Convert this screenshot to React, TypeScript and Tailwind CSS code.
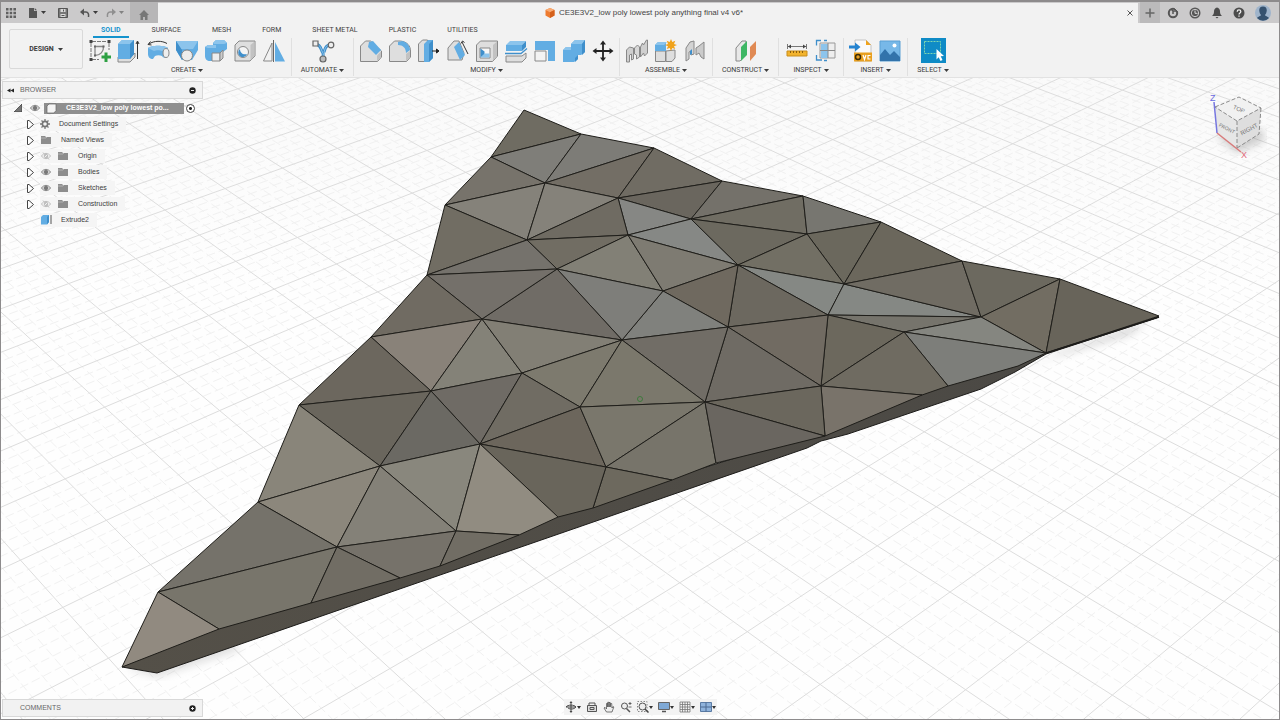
import type { ReactNode } from 'react'
import clsx from 'clsx'

type Pt = [number, number]

/* ---------- Ground grid ---------- */

// Plane to screen: two vanishing points on a level horizon.
const project = (u: number, v: number): Pt => {
  const a = u * 0.03592
  const b = v * 0.03242
  const d = 1 + a + b
  return [(950 - 1147 * a + 2823 * b) / d, (592 - 740 * a - 740 * b) / d]
}

const segment = (p: Pt, q: Pt) =>
  `M${p[0].toFixed(1)} ${p[1].toFixed(1)}L${q[0].toFixed(1)} ${q[1].toFixed(1)}`

function gridPath(major: boolean) {
  const out: string[] = []
  for (let k = -60; k <= 130; k++) {
    if ((k % 5 === 0) !== major) continue
    const c = k / 5
    // keep every end point in front of the camera
    out.push(segment(project(c, Math.max(-14, -24 - c)), project(c, 26)))
    out.push(segment(project(Math.max(-12, -22 - c), c), project(26, c)))
  }
  return out.join('')
}

const MAJOR = gridPath(true)
const MINOR = gridPath(false)

/* ---------- Low poly body ---------- */

const P: Record<string, Pt> = {
  t1: [524, 110], t2: [581, 134], t3: [654, 148], t4: [722, 181], t5: [803, 196],
  t6: [881, 222], t7: [962, 261], t8: [1060, 279], t9: [1159, 316],
  a: [491, 157], b: [445, 205], c: [427, 275], d: [371, 337], e: [299, 405],
  f: [258, 502], g: [158, 592], h: [122, 667],
  i: [545, 183], j: [618, 198], k: [691, 219], l: [527, 240], m: [628, 235],
  n: [557, 269], o: [738, 265], p: [663, 291], q: [807, 234], r: [844, 284],
  s: [828, 315], t: [981, 317], u: [904, 332], v: [1046, 353], w: [728, 327],
  x: [622, 340], y: [482, 319], z: [431, 391],
  A: [522, 373], B: [580, 407], C: [705, 402], D: [821, 386], E: [380, 466],
  F: [480, 444], G: [606, 467], H: [716, 463], I: [825, 436], J: [337, 547],
  K: [456, 531], L: [519, 535], M: [558, 517], N: [593, 508], O: [672, 480],
  P: [922, 395], Q: [948, 386], R: [440, 566], S: [400, 578], U: [311, 603],
  V: [219, 629], W: [1018, 366],
}

const FACES: [string, string][] = [
  ['t1 t2 a', '#6f6c62'], ['a t2 i', '#7f7e79'], ['t2 t3 i', '#7d7c77'], ['t3 j i', '#736e65'],
  ['t3 t4 j', '#706c63'], ['a i b', '#77736b'], ['b i l', '#85827a'], ['i j l', '#85827a'],
  ['t4 k j', '#6a665e'], ['t4 t5 k', '#74716a'], ['t5 q k', '#706d63'], ['j k m', '#868784'],
  ['k o m', '#868885'], ['j m l', '#6f6b62'], ['l m n', '#716d63'], ['b l c', '#716d63'],
  ['c l n', '#75726c'], ['m p n', '#828076'], ['m o p', '#7e7b72'], ['k q o', '#6c695f'],
  ['t5 t6 q', '#777670'], ['q t6 r', '#6b685d'], ['q r o', '#726f64'], ['t6 t7 r', '#6b675c'],
  ['o r s', '#858884'], ['r t s', '#858884'], ['r t7 t', '#706c63'], ['t7 t8 t', '#6c695f'],
  ['t8 v t', '#726d62'], ['t8 t9 v', '#68645a'], ['s t u', '#76746c'], ['t v u', '#858680'],
  ['u v W Q', '#7d7e7a'], ['s u D', '#6c685d'], ['u Q P D', '#6f6b61'], ['D P I', '#79736a'],
  ['o s w', '#6c685f'], ['o w p', '#6f695f'], ['p w x', '#80817d'], ['n p x', '#7e7e7a'],
  ['w s D', '#716b62'], ['w D C', '#6f6b64'], ['x w C', '#716d66'], ['n x y', '#706c66'],
  ['c n y', '#74706a'], ['c y d', '#706b62'], ['d y z', '#898279'], ['y A z', '#848278'],
  ['y x A', '#827f75'], ['x B A', '#7d7a6e'], ['x C B', '#7b786c'], ['d z e', '#6c675e'],
  ['z A F', '#6f6b65'], ['e z E', '#6a665d'], ['z F E', '#6b6963'], ['A B F', '#706c63'],
  ['F B G', '#6c665c'], ['B C G', '#7a776c'], ['C H O G', '#77746a'], ['G O N', '#6d695e'],
  ['F G N M', '#69655b'], ['C D I', '#6b675d'], ['C I H', '#6a6660'], ['e E f', '#89857a'],
  ['f E J', '#8c877c'], ['f J g', '#75726a'], ['E F K', '#89877d'], ['F M L K', '#918c81'],
  ['E K J', '#848178'], ['g J U V', '#78756b'], ['J K R S', '#76726a'], ['J S U', '#716d64'],
  ['K L R', '#716d64'], ['g V h', '#918a80'],
]

const points = (names: string) => names.split(' ').map((n) => P[n].join(',')).join(' ')

function Viewport() {
  return (
    <svg
      className="absolute inset-0 h-full w-full"
      viewBox="1 78 1278 641"
      preserveAspectRatio="xMidYMid slice"
      aria-label="Model viewport"
    >
      <defs>
        <linearGradient id="fade" x1="0" y1="0" x2="0" y2="1">
          <stop offset="0" stopColor="#f8f8f8" />
          <stop offset="0.4" stopColor="#fefefe" />
        </linearGradient>
        <linearGradient id="shade" x1="0" y1="0" x2="1" y2="0">
          <stop offset="0" stopColor="#545048" />
          <stop offset="1" stopColor="#4a4844" />
        </linearGradient>
        <filter id="soft">
          <feGaussianBlur stdDeviation="4" />
        </filter>
      </defs>
      <rect x="0" y="0" width="1280" height="720" fill="url(#fade)" />
      <path d={MINOR} fill="none" stroke="#f1f1f1" strokeWidth="1" strokeDasharray="9 4" />
      <path d={MAJOR} fill="none" stroke="#dddddd" strokeWidth="1" />

      {/* contact shadow */}
      <path d="M1000 382L1060 352L1148 322L1130 334L1050 358Z" fill="#777" opacity="0.4" filter="url(#soft)" />
      <path d="M126 668L157 677L240 650L230 640Z" fill="#999" opacity="0.3" filter="url(#soft)" />

      <path
        d="M122 667L157 673L807 448L821 441L848 434L981 389L1015 372L1046 354L1159 317L1046 352L948 380L825 430L600 500L219 620Z"
        fill="url(#shade)"
        stroke="#1c1b19"
        strokeWidth="1"
        strokeLinejoin="round"
      />
      {FACES.map(([names, fill]) => (
        <polygon key={names} points={points(names)} fill={fill} stroke="#1f1e1a" strokeWidth="1" strokeLinejoin="round" />
      ))}
      <path d="M1046 353L1100 336L1159 317" fill="none" stroke="#1c1b19" strokeWidth="1.500" />
      <circle cx="640" cy="399" r="2.500" fill="none" stroke="#3f7a3c" />
    </svg>
  )
}

/* ---------- Icons ---------- */

function Svg({ children, size = 24, className }: { children: ReactNode; size?: number; className?: string }) {
  return (
    <svg viewBox={`0 0 ${size} ${size}`} width={size} height={size} fill="none" className={clsx('shrink-0', className)} aria-hidden="true">
      {children}
    </svg>
  )
}

const BLUE = '#62ade3'
const DEEP = '#3f8fcb'
const PALE = '#8cc4ec'
const LINE = '#888888'
const BODY = '#dedede'

const Caret = () => (
  <svg viewBox="0 0 5 3" width="5" height="3" className="shrink-0" aria-hidden="true">
    <path d="M0 0h5L2.500 3z" fill="#3c3c3c" />
  </svg>
)

const icons: Record<string, ReactNode> = {
  'Create Sketch': (
    <>
      <path d="M4 2.500H19M3 4V18.500M4 20.500H11M21 4V11" stroke="#777" strokeDasharray="4 1" />
      <path d="M1.500 1h3v3h-3zM19.500 1h3v3h-3zM1.500 19h3v3h-3z" fill="#444" />
      <path d="M7 7.500h8.500c.3 5-3.300 9-8.500 9z" stroke="#888" strokeWidth="1.300" />
      <path d="M6 6.500h2v2H6zM14.500 6.500h2v2h-2zM6 15.500h2v2H6z" fill="#666" />
      <path d="M18 13.500v9.500M13.500 18h9.500" stroke="#2ea043" strokeWidth="3" />
    </>
  ),
  Extrude: (
    <>
      <path d="M1 18h13l4-4v4l-5 5H1z" fill={BODY} stroke={LINE} />
      <path d="M1 5l4-4h12v14l-4 5H1z" fill={BLUE} />
      <path d="M1 5l4-4h12l-4 4z" fill={PALE} />
      <path d="M13 5l4-4v14l-4 5z" fill={DEEP} />
      <path d="M20.500 20V3M19 5l1.500-3L22 5" stroke="#333" />
    </>
  ),
  Revolve: (
    <>
      <path d="M2 9c3-3 17-3 20 0l-1 9c-2 1-4 1-5-1-2-1-5-1-7 0l-2 3C4 20 2 18 2 15z" fill={BLUE} />
      <path d="M2 9c3-3 17-3 20 0l-6 3c-2-1-6-1-8 0z" fill={PALE} />
      <ellipse cx="20" cy="14" rx="3" ry="4.500" fill="#eee" stroke={LINE} />
      <path d="M3 5c5-3.500 13-3.500 18-.5M4.500 2.500L2 5.500l3.500.5" stroke="#333" />
    </>
  ),
  Sweep: (
    <>
      <path d="M1 2h22v9l-6 10H7L1 11z" fill={BLUE} />
      <path d="M1 2h22l-5 8H6z" fill={PALE} />
      <path d="M1 2l6 9v10L1 11z" fill={DEEP} />
      <circle cx="12" cy="16.500" r="5.500" fill="#ececec" stroke={LINE} />
    </>
  ),
  Loft: (
    <>
      <path d="M9 4l3-3h8l3 3v6l-4 3H9z" fill={BLUE} />
      <path d="M1 8l3-2h8v5h7v8l-4 3H6c-3 0-5-2-5-5z" fill={BLUE} />
      <path d="M9 4l3-3h8l3 3-3 1H10zM1 8l3-2h8v3H4z" fill={PALE} />
      <path d="M8 14h8v8H8z" fill="#eee" stroke={LINE} />
      <path d="M16 14l3-3v8l-3 3z" fill="#ccc" stroke={LINE} />
    </>
  ),
  Hole: (
    <>
      <path d="M2 6l4-4h16v15l-5 5H2z" fill={BODY} stroke={LINE} />
      <path d="M17.500 6l4-3.500v14.500l-4 4.500z" fill="#c2c2c2" />
      <circle cx="10" cy="13" r="5.500" fill="#f4f4f4" stroke={LINE} />
      <path d="M7 10a4.500 4.500 0 1 0 7 5c-4 1-7-1-7-5z" fill={DEEP} />
    </>
  ),
  Mirror: (
    <>
      <path d="M10 4v18H1.500z" fill="#f2f2f2" stroke={LINE} />
      <path d="M13 3l10 19.500H13z" fill={BLUE} />
      <path d="M11.500 1v22" stroke="#666" />
    </>
  ),
  Automate: (
    <>
      <path d="M5 5c5 1 5 6 6.500 8S12 17 12 19M19 6c-5 0-5 5-6 7" stroke={DEEP} strokeWidth="3" />
      <path d="M5 5c5 1 5 6 6.500 8S12 17 12 19M19 6c-5 0-5 5-6 7" stroke={PALE} strokeWidth="1" />
      <path d="M2 2h5v5H2z" fill="#eee" stroke="#666" strokeWidth="1.200" />
      <circle cx="20" cy="6" r="2.800" fill="#eee" stroke="#666" strokeWidth="1.200" />
      <circle cx="12" cy="20" r="3" fill="#bbb" stroke="#666" strokeWidth="1.200" />
    </>
  ),
  'Press Pull': (
    <>
      <path d="M1.500 7l5-5h5l11 10v6l-4 4.500h-17z" fill={BODY} stroke={LINE} />
      <path d="M10 3l4-1 8 9-5 5-8-8z" fill={BLUE} />
      <path d="M18 16.500l4-4v5.500l-4 4z" fill="#c2c2c2" />
    </>
  ),
  Fillet: (
    <>
      <path d="M1.500 7l5-5h6c7 1 10 5 10 10v6l-4 4.500h-17z" fill={BODY} stroke={LINE} />
      <path d="M10 3l4-1c5 1 8 5 8 9l-4 3c0-5-3-8-8-8z" fill={BLUE} />
      <path d="M18 15l4-3v6l-4 4z" fill="#c2c2c2" />
    </>
  ),
  Chamfer: (
    <>
      <path d="M1.500 5l4-4h5v18l-3 3.500h-6z" fill={BODY} stroke={LINE} />
      <path d="M7 5l4-4h5v18l-4 4H7z" fill={BLUE} />
      <path d="M12 5l4-4v18l-4 4z" fill={DEEP} />
      <path d="M15 12h6M19.500 10l2.500 2-2.500 2z" stroke="#222" fill="#222" />
    </>
  ),
  Draft: (
    <>
      <path d="M2 9l6-7h5l5 12-2 7H2z" fill={BODY} stroke={LINE} />
      <path d="M8 8l5-5 6 13-5 5z" fill={BLUE} />
      <path d="M16 3l6 12M15 4.500L16.500 2l2 1.500" stroke="#333" />
    </>
  ),
  Shell: (
    <>
      <path d="M1.500 6l4-4h17v15l-5 5.500h-16z" fill={BODY} stroke={LINE} />
      <path d="M18 6l4-3.500v14.500l-4 4.500z" fill="#c2c2c2" />
      <path d="M5 9h10v10H5z" fill="#f7f7f7" stroke={LINE} />
      <path d="M5.500 9.500l4 3v3l-4 3z" fill={DEEP} />
      <path d="M5.500 18.500l4-4h5v4z" fill={PALE} />
    </>
  ),
  'Split Body': (
    <>
      <path d="M2 17h16l4-3v5l-4 4H2z" fill={BODY} stroke={LINE} />
      <path d="M2 6l4-4h16l-4 4z" fill={PALE} />
      <path d="M2 6h16v6H2z" fill={BLUE} />
      <path d="M18 6l4-4v6l-4 4z" fill={DEEP} />
      <path d="M1 14.500h16l6-5" stroke={DEEP} strokeWidth="1.300" />
    </>
  ),
  Scale: (
    <>
      <path d="M2 2h20v20h-7v-11H2z" fill={BLUE} />
      <path d="M2 12h11v10H2z" fill="#f3f3f3" stroke={LINE} />
    </>
  ),
  Combine: (
    <>
      <path d="M9 5l4-4h10v12l-4 3h-3v4l-4 3H1V11l3-3h5z" fill={BLUE} />
      <path d="M9 5l4-4h10l-3 4zM1 11l3-3h5v3z" fill={PALE} />
      <path d="M20 5l3-4v12l-3 3zM13 19l3-3v4l-3 3z" fill={DEEP} />
    </>
  ),
  Move: (
    <>
      <path d="M12 3v18M3 12h18" stroke="#222" strokeWidth="1.800" />
      <path d="M12 1.500l3 4h-6zM12 22.500l3-4h-6zM1.500 12l4-3v6zM22.500 12l-4-3v6z" fill="#222" />
    </>
  ),
  'New Component': (
    <>
      <path d="M1.500 11l3-3 4 1v11l-2 1v-6l-2 1v7h-3z" fill="#cfcfcf" stroke={LINE} />
      <path d="M9.500 9l3-3 2 2v10l-3 2v-4l-2-1z" fill="#d8d8d8" stroke={LINE} />
      <path d="M15.500 8l2-4 1 2 3-5h1v13l-3 3-1-3-3 4z" fill="#cfcfcf" stroke={LINE} />
    </>
  ),
  Joint: (
    <>
      <path d="M1.500 12h10v10.500h-10zM12 12l9-1v8l-3 3.500h-6z" fill={BODY} stroke={LINE} />
      <path d="M1 6l3-3h8v9H1z" fill={BLUE} />
      <path d="M1 6l3-3h9l-3 3z" fill={PALE} />
      <path d="M17 0l1.300 3 3-1.300L20 5l3 1-3 1.300L21.300 10l-3-1L17 12l-1.300-3-3 1L14 7.300 11 6l3-1-1.300-3.300 3 1.300z" fill="#f0a31c" />
    </>
  ),
  'As-built Joint': (
    <>
      <path d="M3 9l4-6 4-1v13l-3 1v-4l-2 1v7l-3 2z" fill="#d3d3d3" stroke={LINE} />
      <path d="M13 9l3-2 5-4v17l-3-2-2-4-3 2z" fill="#cbcbcb" stroke={LINE} />
      <path d="M7 12l2-2v5l-2 1z" fill={DEEP} />
    </>
  ),
  'Offset Plane': (
    <>
      <path d="M2 9l6-7h4v14l-6 6H2z" fill="#e8e8e8" stroke={LINE} />
      <path d="M7 8l6-6v14l-6 6z" fill="#3fb765" />
      <path d="M16 8l6-6v13l-6 7z" fill="#e08a54" />
    </>
  ),
  Measure: (
    <>
      <path d="M2.500 5v5M21.500 5v5M3 7.500h18" stroke="#777" />
      <path d="M3 7.500l3-2v4zM21 7.500l-3-2v4z" fill="#444" />
      <path d="M2 12h20v5H2z" fill="#f2b32d" stroke="#c98d1b" />
      <path d="M5.500 12v2M8.500 12v2M11.500 12v2M14.500 12v2M17.500 12v2" stroke="#8a5d0c" />
    </>
  ),
  Interference: (
    <>
      <path d="M6 4h15v15H6z" fill="#eee" stroke="#999" />
      <path d="M7 5h7v14H7z" fill={PALE} />
      <path d="M6 11.500h15M14 4v15" stroke="#888" />
      <path d="M7 1.500H2.500v5M2.500 16v5H8M10 1.500h3M10 21.500h3" stroke={DEEP} strokeWidth="1.300" />
    </>
  ),
  'Insert SVG': (
    <>
      <path d="M6 1h11l5 5v16H6z" fill="#fafafa" stroke="#c4c4c4" />
      <path d="M17 1l5 5h-5z" fill="#f0a31c" />
      <path d="M5 13.500h18v9H5z" fill="#e9a01f" />
      <circle cx="9" cy="18" r="2.500" stroke="#3c2c08" strokeWidth="1.500" />
      <path d="M14 16l1.500 4.500L17 16M21.500 16.500H19V20h2.500" stroke="#fff" strokeWidth="1.200" />
      <path d="M0 6.500h6V3.500L11.500 8 6 12.500v-3H0z" fill="#2684d0" />
    </>
  ),
  Decal: (
    <>
      <path d="M2 2h20v20H2z" fill="#77b8e8" stroke="#5a9fd4" />
      <path d="M2 16l5-6 5 6 4-4 6 6v4H2z" fill="#3273ab" />
      <circle cx="16.500" cy="6.500" r="2" fill="#fff" />
    </>
  ),
}

/* ---------- Title bar ---------- */

function TitleBar() {
  return (
    <header className="flex h-[21px] items-stretch bg-[#cbcacb] text-[#555]">
      <div className="flex w-[129px] items-center gap-1 pl-[5px]">
        <button aria-label="Data panel" className="mr-2">
          <Svg size={10}>
            <path d="M0 0h2.500v2.500H0zM3.700 0h2.500v2.500H3.700zM7.400 0H10v2.500H7.400zM0 3.700h2.500v2.500H0zM3.700 3.700h2.500v2.500H3.700zM7.400 3.700H10v2.500H7.400zM0 7.400h2.500V10H0zM3.700 7.400h2.500V10H3.700zM7.400 7.400H10V10H7.400z" fill="#606060" />
          </Svg>
        </button>
        <button aria-label="File" className="mr-2 flex items-center gap-[3px]">
          <Svg size={10}>
            <path d="M1 0h5v3h3v7H1z" fill="#565656" />
            <path d="M6.700 0L9 2.300H6.700z" fill="#565656" />
          </Svg>
          <Caret />
        </button>
        <button aria-label="Save" className="mr-2">
          <Svg size={10}>
            <path d="M.500.500h9v9h-9z" fill="#777" stroke="#555" />
            <path d="M2.500 1h5v3h-5zM2.500 6h5v3h-5z" fill="#d8d8d8" />
            <path d="M5.500 1.500v2M3.500 7.500h3" stroke="#555" />
          </Svg>
        </button>
        <button aria-label="Undo" className="mr-1 flex items-center gap-[3px]">
          <Svg size={10}>
            <path d="M2 4h4c2 0 3 2 2.500 5" stroke="#555" strokeWidth="1.500" />
            <path d="M0 4l4-3.500v7z" fill="#555" />
          </Svg>
          <Caret />
        </button>
        <button aria-label="Redo" className="flex items-center gap-[3px] opacity-50">
          <Svg size={10}>
            <path d="M8 4H4C2 4 1 6 1.500 9" stroke="#555" strokeWidth="1.500" />
            <path d="M10 4L6 .5v7z" fill="#555" />
          </Svg>
          <Caret />
        </button>
      </div>
      <button aria-label="Home" className="grid w-7 place-items-center bg-[#b7b6b7] pt-1">
        <Svg size={10}>
          <path d="M5 0l5 5H8.500v5h-2.500V7H4v3H1.500V5H0z" fill="#777" />
        </Svg>
      </button>
      <div className="mt-px flex min-w-0 flex-1 items-center bg-[#f2f2f2] pr-1">
        <div className="flex min-w-0 flex-1 items-center justify-center gap-1 pl-1">
          <Svg size={10}>
            <path d="M5 0l4.500 2v5.500L5 10 .5 7.500V2z" fill="#ee7b30" />
            <path d="M5 0l4.500 2L5 4.200.5 2z" fill="#f9ab73" />
            <path d="M5 4.200L9.500 2v5.500L5 10z" fill="#d4601a" />
          </Svg>
          <h1 className="truncate text-[8px] leading-3 text-[#444]">CE3E3V2_low poly lowest poly anything final v4 v6*</h1>
        </div>
        <button aria-label="Close tab">
          <Svg size={8}>
            <path d="M1.500 1.500l5 5M6.500 1.500l-5 5" stroke="#555" />
          </Svg>
        </button>
      </div>
      <button aria-label="New tab" className="ml-0.5 grid w-5 place-items-center bg-[#bbbabb]">
        <Svg size={10}>
          <path d="M5 .5v9M.5 5h9" stroke="#666" strokeWidth="1.500" />
        </Svg>
      </button>
      <div className="flex items-center gap-[10px] pl-[7px] pr-2">
        <button aria-label="Extensions">
          <Svg size={12}>
            <circle cx="6" cy="6" r="4.200" stroke="#555" strokeWidth="2" />
            <path d="M6 7V4h3M4 2l2 2" stroke="#555" strokeWidth="1.500" />
            <path d="M8 1l3 3" stroke="#cbcacb" />
          </Svg>
        </button>
        <button aria-label="Job status">
          <Svg size={12}>
            <circle cx="6" cy="6" r="5.500" fill="#555" />
            <circle cx="6" cy="6" r="3.700" stroke="#cbcacb" />
            <path d="M6 3.500V6.300h2.500" stroke="#ddd" />
          </Svg>
        </button>
        <button aria-label="Notifications">
          <Svg size={12}>
            <path d="M6 .5c2 .5 3 2 3 4 0 2 .5 3 2 4.500H1c1.500-1.500 2-2.500 2-4.500 0-2 1-3.500 3-4z" fill="#4c4c4c" />
            <path d="M4.500 10h3L6 11.500z" fill="#4c4c4c" />
          </Svg>
        </button>
        <button aria-label="Help">
          <Svg size={12}>
            <circle cx="6" cy="6" r="5.500" fill="#4c4c4c" />
            <path d="M4.200 4.700c0-2.500 3.600-2.300 3.600-.2C7.800 6 6 5.800 6 7.500M6 8.500v1.200" stroke="#eee" strokeWidth="1.300" />
          </Svg>
        </button>
        <button aria-label="Account">
          <Svg size={16}>
            <circle cx="8" cy="8" r="8" fill="#9fb4cb" />
            <path d="M8 1.500c3 0 4 2 3.700 4.500-.2 2-1 3-1.700 4 0 1 3 1.500 4 3a8 8 0 0 1-12 0c1-1.500 4-2 4-3-.7-1-1.500-2-1.700-4C4 3.500 5 1.500 8 1.500z" fill="#36526f" />
          </Svg>
        </button>
      </div>
    </header>
  )
}

/* ---------- Ribbon ---------- */

const TABS = ['SOLID', 'SURFACE', 'MESH', 'FORM', 'SHEET METAL', 'PLASTIC', 'UTILITIES']

const GROUPS: { label: string; width: string; tools: string[] }[] = [
  { label: 'CREATE', width: 'w-[209px]', tools: ['Create Sketch', 'Extrude', 'Revolve', 'Sweep', 'Loft', 'Hole', 'Mirror'] },
  { label: 'AUTOMATE', width: 'w-[62px]', tools: ['Automate'] },
  { label: 'MODIFY', width: 'w-[266px]', tools: ['Press Pull', 'Fillet', 'Chamfer', 'Draft', 'Shell', 'Split Body', 'Scale', 'Combine', 'Move'] },
  { label: 'ASSEMBLE', width: 'w-[93px]', tools: ['New Component', 'Joint', 'As-built Joint'] },
  { label: 'CONSTRUCT', width: 'w-[66px]', tools: ['Offset Plane'] },
  { label: 'INSPECT', width: 'w-[65px]', tools: ['Measure', 'Interference'] },
  { label: 'INSERT', width: 'w-[64px]', tools: ['Insert SVG', 'Decal'] },
]

function GroupLabel({ children }: { children: string }) {
  return (
    <button className="mt-px flex items-center gap-[2px] text-[7px] leading-3 text-[#3a3a3a]">
      {children}
      <Caret />
    </button>
  )
}

function Ribbon() {
  return (
    <div className="flex h-[55px] border-b border-[#e2e2e2] bg-[#f2f2f2] pl-2 font-['Roboto',sans-serif]">
      <button className="mt-[6px] flex h-10 w-[74px] shrink-0 items-center justify-center gap-1 rounded-[2px] border border-[#d9d9d9] text-[7px] font-bold text-[#3a3a3a]">
        DESIGN
        <Caret />
      </button>
      <div className="flex min-w-0 flex-1 flex-col">
        <nav className="flex h-[15px] gap-[15px] pl-[10px]">
          {TABS.map((tab, i) => (
            <button
              key={tab}
              className={clsx(
                'border-b-2 px-2 text-[7px] leading-3',
                i === 0 ? 'border-[#1593cd] font-bold text-[#1593cd]' : 'border-transparent text-[#3f3f3f]',
              )}
            >
              {tab}
            </button>
          ))}
        </nav>
        <div className="flex">
          {GROUPS.map((group) => (
            <section key={group.label} className={clsx('flex shrink-0 flex-col items-center border-r border-[#e0e0e0]', group.width)}>
              <div className="flex h-[25px] items-center gap-[5px]">
                {group.tools.map((tool) => (
                  <button key={tool} aria-label={tool}>
                    <Svg>{icons[tool]}</Svg>
                  </button>
                ))}
              </div>
              <GroupLabel>{group.label}</GroupLabel>
            </section>
          ))}
          <section className="flex w-[50px] shrink-0 flex-col items-center">
            <div className="flex h-[25px] items-center">
              <button aria-label="Select" className="bg-[#0f8bc6]">
                <Svg size={25}>
                  <path d="M3.500 3.500h16v12h-16z" stroke="#7fd6b0" strokeDasharray="2 1" />
                  <path d="M15.500 11l7.500 7-3.300.3 1.800 3.700-2 1-1.800-3.700-2.200 2.200z" fill="#fff" />
                </Svg>
              </button>
            </div>
            <GroupLabel>SELECT</GroupLabel>
          </section>
        </div>
      </div>
    </div>
  )
}

/* ---------- Browser tree ---------- */

const Eye = ({ off = false }: { off?: boolean }) => (
  <Svg size={10} className={clsx(off && 'opacity-50')}>
    <path d="M.5 5C2.500 1.500 7.500 1.500 9.500 5 7.500 8.500 2.500 8.500.500 5z" stroke="#888" fill={off ? 'none' : '#ddd'} />
    <circle cx="5" cy="5" r="1.800" fill={off ? 'none' : '#777'} stroke="#777" />
    {off && <path d="M2 1.500l6 7" stroke="#888" />}
  </Svg>
)

const Folder = () => (
  <Svg size={12}>
    <path d="M1 2h4l1 1h5v7H1z" fill="#8d8d8d" />
    <path d="M1 4h5l1-1" stroke="#c4c4c4" strokeWidth=".7" />
  </Svg>
)

const Gear = () => (
  <Svg size={10}>
    <circle cx="5" cy="5" r="2.600" stroke="#777" strokeWidth="1.600" />
    <path d="M5 0v2M5 8v2M0 5h2M8 5h2M1.500 1.500l1.300 1.300M7.200 7.200l1.300 1.300M8.500 1.500L7.200 2.800M2.800 7.200L1.500 8.500" stroke="#777" strokeWidth="1.300" />
  </Svg>
)

const ExtrudeMini = () => (
  <Svg size={12}>
    <path d="M1 3l2-2h6v7L7 10.500H1z" fill={BLUE} />
    <path d="M7 3l2-2v7L7 10.500z" fill={DEEP} />
    <path d="M11 1v9" stroke="#555" />
  </Svg>
)

type Node = { label: string; eye?: 'on' | 'off'; icon?: ReactNode; leaf?: boolean }

const NODES: Node[] = [
  { label: 'Document Settings', icon: <Gear /> },
  { label: 'Named Views', icon: <Folder /> },
  { label: 'Origin', eye: 'off', icon: <Folder /> },
  { label: 'Bodies', eye: 'on', icon: <Folder /> },
  { label: 'Sketches', eye: 'on', icon: <Folder /> },
  { label: 'Construction', eye: 'off', icon: <Folder /> },
  { label: 'Extrude2', icon: <ExtrudeMini />, leaf: true },
]

function PanelBar({ title, children, action }: { title: string; children?: ReactNode; action: ReactNode }) {
  return (
    <div className="flex h-[18px] w-[201px] items-center border border-[#d8d8d8] bg-[#f2f2f2] pl-[4px] pr-[6px]">
      <span className="w-[13px]">{children}</span>
      <h2 className="flex-1 text-[7px] text-[#666]">{title}</h2>
      {action}
    </div>
  )
}

function Browser() {
  return (
    <aside className="relative w-[210px] pl-px pt-[3px]">
      <PanelBar
        title="BROWSER"
        action={
          <button aria-label="Hide browser">
            <Svg size={7}>
              <circle cx="3.500" cy="3.500" r="3.200" fill="#222" />
              <path d="M2 3.500h3" stroke="#eee" />
            </Svg>
          </button>
        }
      >
        <Svg size={7}>
          <path d="M0 3.500l3.500-2v4zM3.500 3.500l3.500-2v4z" fill="#222" />
        </Svg>
      </PanelBar>
      <ul className="mt-px text-[7px] text-[#3c3c3c]">
        <li className="flex h-4 items-center pl-3">
          <button aria-label="Collapse document" className="mr-2">
            <Svg size={8}>
              <path d="M0 8h8V0z" fill="#777" stroke="#333" strokeWidth=".7" />
            </Svg>
          </button>
          <Eye />
          <button className="ml-1 flex h-[11px] w-[140px] items-center gap-[9px] bg-[#8f8f8f] pl-[2px] font-bold text-white">
            <Svg size={11}>
              <path d="M1 3l2-2h7v6.500L8 10H1z" fill="#f4f4f4" stroke="#666" strokeWidth=".7" />
            </Svg>
            CE3E3V2_low poly lowest po...
          </button>
          <label className="ml-[2px] grid place-items-center">
            <input
              type="radio"
              name="active"
              defaultChecked
              aria-label="Activate component"
              className="h-[9px] w-[9px] appearance-none rounded-full border border-[#444] bg-[radial-gradient(circle,#222_0_1px,#fff_2px)]"
            />
          </label>
        </li>
        {NODES.map((node) => (
          <li key={node.label} className="flex h-4 items-center pl-6">
            <span className="w-[14px]">
              {!node.leaf && (
                <button aria-label={`Expand ${node.label}`} className="block">
                  <Svg size={9}>
                    <path d="M1.500.5v8h1.500l4.500-4L3 .5z" fill="#fff" stroke="#444" />
                  </Svg>
                </button>
              )}
            </span>
            <span className="flex h-[14px] items-center bg-[#f5f5f5] pr-2">
              {node.eye && (
                <button aria-label={`Toggle ${node.label}`} className="mr-[6px] pl-[1px]">
                  <Eye off={node.eye === 'off'} />
                </button>
              )}
              {node.icon}
              <span className="ml-[9px]">{node.label}</span>
            </span>
          </li>
        ))}
      </ul>
    </aside>
  )
}

/* ---------- View cube ---------- */

function ViewCube() {
  return (
    <button aria-label="View cube" className="absolute right-3 top-[11px]">
      <svg viewBox="1204 89 62 72" width="62" height="72" fill="none" aria-hidden="true">
        <path d="M1214 135l22 18 28-13-4-12-22 8z" fill="#777" opacity="0.35" filter="url(#soft)" />
        <path d="M1214 107l24-10 22 11-24 13z" fill="#f1f1f1" />
        <path d="M1214 107l22 14v27l-20-15z" fill="#e6e6e6" />
        <path d="M1236 121l24-13-2 26-22 14z" fill="#dedede" />
        <path d="M1214 107l24-10 22 11-24 13zM1236 121v27M1260 108l-2 26-22 14" stroke="#8a8a8a" strokeDasharray="4 2" />
        <path d="M1213 102l3 31" stroke="#7676e0" strokeWidth="1.500" />
        <path d="M1216 133l24 19" stroke="#d87a7a" strokeWidth="1.500" />
        <g fontFamily="Liberation Sans" fontSize="6" fill="#777" textAnchor="middle">
          <text x="1237" y="111" transform="rotate(24 1237 111)">TOP</text>
          <text x="1225" y="130" fontSize="5" transform="rotate(28 1225 130)">FRONT</text>
          <text x="1249" y="131" transform="rotate(-28 1249 131)">RIGHT</text>
        </g>
        <text x="1209" y="101" fontFamily="Liberation Sans" fontSize="9" fill="#6a6ae0">Z</text>
        <text x="1240" y="158" fontFamily="Liberation Sans" fontSize="9" fill="#e26a7a">X</text>
      </svg>
    </button>
  )
}

/* ---------- Bottom bar ---------- */

const NAV: { label: string; menu?: boolean; icon: ReactNode }[] = [
  { label: 'Orbit', menu: true, icon: <><path d="M6 1v10M1 6h10" stroke="#444" /><path d="M1 6c2-2.500 8-2.500 10 0-2 2.500-6 2.500-8 1" stroke="#444" /><path d="M6 0l1.500 2h-3zM6 12l1.500-2h-3z" fill="#444" /></> },
  { label: 'Look At', icon: <><path d="M1.500 4.500h9v6h-9z" fill="#ddd" stroke="#555" /><path d="M4 6.500h4v2H4z" stroke="#555" /><path d="M3 4V2h6v2" stroke="#555" /></> },
  { label: 'Pan', icon: <path d="M3.500 11L1 7l1-.7L3.500 8V2.500h1.200V6 1.300H6V6 1.500h1.200V6l.3-3.500h1.200L9 7l1-1.500.8.500L9 11z" fill="#eee" stroke="#444" strokeWidth=".7" /> },
  { label: 'Zoom', icon: <><circle cx="4.500" cy="5" r="3" fill="#eee" stroke="#555" /><path d="M6.500 7.500L10 11" stroke="#555" strokeWidth="1.500" /><path d="M10 1v3M8.500 2.500h3M8.500 6h3" stroke="#444" strokeWidth=".8" /></> },
  { label: 'Fit', menu: true, icon: <><path d="M.5.500h9.500v10H.500z" stroke="#888" strokeDasharray="1.500 1.500" /><circle cx="5.500" cy="5.500" r="3.500" fill="#eee" stroke="#555" /><path d="M8 8l3.500 3.500" stroke="#444" strokeWidth="1.500" /></> },
  { label: 'Display Settings', menu: true, icon: <><path d="M.5 1.500h11v7H.500z" fill="#7fa9d6" stroke="#666" /><path d="M4 10.500h4" stroke="#555" strokeWidth="1.500" /></> },
  { label: 'Grid and Snaps', menu: true, icon: <path d="M1 1h10v10H1zM3.500 1v10M6 1v10M8.500 1v10M1 3.500h10M1 6h10M1 8.500h10" fill="#f3f3f3" stroke="#777" strokeWidth=".8" /> },
  { label: 'Viewports', menu: true, icon: <><path d="M.5 1.500h11v9H.500z" fill="#8fb3dc" stroke="#5a7ba4" /><path d="M6 1.500v9M.5 6h11" stroke="#4d6b92" /></> },
]

function BottomBar() {
  return (
    <footer className="relative grid grid-cols-[1fr_auto_1fr] items-start pb-[2px] pl-px">
      <PanelBar
        title="COMMENTS"
        action={
          <button aria-label="Add comment">
            <Svg size={7}>
              <circle cx="3.500" cy="3.500" r="3.200" fill="#222" />
              <path d="M2 3.500h3M3.500 2v3" stroke="#eee" />
            </Svg>
          </button>
        }
      />
      <div className="flex h-4 items-center gap-[5px] bg-[#f3f3f3] px-px">
        {NAV.map((item) => (
          <button key={item.label} aria-label={item.label} className="flex items-center">
            <Svg size={12}>{item.icon}</Svg>
            {item.menu && (
              <svg viewBox="0 0 4 3" width="4" height="3" aria-hidden="true">
                <path d="M0 0h4L2 3z" fill="#333" />
              </svg>
            )}
          </button>
        ))}
      </div>
    </footer>
  )
}

export default function App() {
  return (
    <div className="flex min-h-screen flex-col border border-t-2 border-[#8d8b8c] bg-white font-['Liberation_Sans',Arial,sans-serif]">
      <TitleBar />
      <Ribbon />
      <main className="relative flex flex-1 flex-col justify-between overflow-hidden">
        <Viewport />
        <Browser />
        <ViewCube />
        <BottomBar />
      </main>
    </div>
  )
}
